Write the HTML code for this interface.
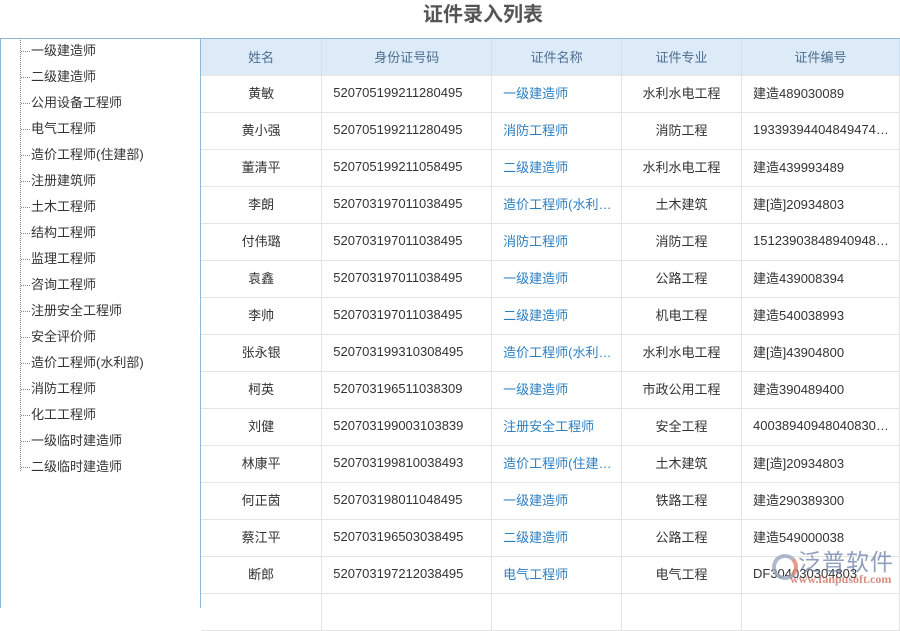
<!DOCTYPE html><html><head><meta charset="utf-8"><style>
body{margin:0;width:900px;height:597px;background:#fff;font-family:"Liberation Sans","Noto Sans CJK SC",sans-serif;overflow:hidden;position:relative}
.title{position:absolute;top:1px;left:0;width:966px;text-align:center;font-size:20px;font-weight:bold;color:#555;line-height:28px}
.panel{position:absolute;top:38px;left:0;width:900px;height:570px;border-top:1px solid #8fb8d6}
.left{position:absolute;top:38px;left:0;width:201px;height:570px;border-left:1px solid #8fb8d6;border-right:1px solid #8fb8d6;box-sizing:border-box}
.vline{position:absolute;left:19px;top:0;height:433px;border-left:1px dotted #888}
.item{position:absolute;left:30px;font-size:13px;color:#333;line-height:16px}
.item:before{content:"";position:absolute;left:-10px;top:8px;width:9px;border-top:1px dotted #888}
table{position:absolute;top:39px;left:201px;border-collapse:collapse;font-size:13px;color:#333}
td,th{height:36px;border-right:1px solid #e4e4e4;border-bottom:1px solid #e4e4e4;padding:0;white-space:nowrap;overflow:hidden}
th{background:#ddebf8;color:#4d6e8f;font-weight:normal;border-right:1px solid #cfe0f0;height:35px;padding-bottom:1px}
td{padding-bottom:3px;height:33px}
td.c{text-align:center}td.l{padding-left:11px}
.a{color:#2d7fc1}
</style></head><body>
<div class="title">证件录入列表</div>
<div class="panel"></div>
<div class="left"><div class="vline"></div>
<div class="item" style="top:5px">一级建造师</div><div class="item" style="top:31px">二级建造师</div><div class="item" style="top:57px">公用设备工程师</div><div class="item" style="top:83px">电气工程师</div><div class="item" style="top:109px">造价工程师(住建部)</div><div class="item" style="top:135px">注册建筑师</div><div class="item" style="top:161px">土木工程师</div><div class="item" style="top:187px">结构工程师</div><div class="item" style="top:213px">监理工程师</div><div class="item" style="top:239px">咨询工程师</div><div class="item" style="top:265px">注册安全工程师</div><div class="item" style="top:291px">安全评价师</div><div class="item" style="top:317px">造价工程师(水利部)</div><div class="item" style="top:343px">消防工程师</div><div class="item" style="top:369px">化工工程师</div><div class="item" style="top:395px">一级临时建造师</div><div class="item" style="top:421px">二级临时建造师</div>
</div>
<table>
<colgroup><col style="width:121px"><col style="width:170px"><col style="width:130px"><col style="width:120px"><col style="width:158px"></colgroup>
<tr><th>姓名</th><th>身份证号码</th><th>证件名称</th><th>证件专业</th><th>证件编号</th></tr>
<tr><td class="c">黄敏</td><td class="l">520705199211280495</td><td class="l a">一级建造师</td><td class="c">水利水电工程</td><td class="l">建造489030089</td></tr>
<tr><td class="c">黄小强</td><td class="l">520705199211280495</td><td class="l a">消防工程师</td><td class="c">消防工程</td><td class="l">19339394404849474…</td></tr>
<tr><td class="c">董清平</td><td class="l">520705199211058495</td><td class="l a">二级建造师</td><td class="c">水利水电工程</td><td class="l">建造439993489</td></tr>
<tr><td class="c">李朗</td><td class="l">520703197011038495</td><td class="l a">造价工程师(水利…</td><td class="c">土木建筑</td><td class="l">建[造]20934803</td></tr>
<tr><td class="c">付伟璐</td><td class="l">520703197011038495</td><td class="l a">消防工程师</td><td class="c">消防工程</td><td class="l">15123903848940948…</td></tr>
<tr><td class="c">袁鑫</td><td class="l">520703197011038495</td><td class="l a">一级建造师</td><td class="c">公路工程</td><td class="l">建造439008394</td></tr>
<tr><td class="c">李帅</td><td class="l">520703197011038495</td><td class="l a">二级建造师</td><td class="c">机电工程</td><td class="l">建造540038993</td></tr>
<tr><td class="c">张永银</td><td class="l">520703199310308495</td><td class="l a">造价工程师(水利…</td><td class="c">水利水电工程</td><td class="l">建[造]43904800</td></tr>
<tr><td class="c">柯英</td><td class="l">520703196511038309</td><td class="l a">一级建造师</td><td class="c">市政公用工程</td><td class="l">建造390489400</td></tr>
<tr><td class="c">刘健</td><td class="l">520703199003103839</td><td class="l a">注册安全工程师</td><td class="c">安全工程</td><td class="l">40038940948040830…</td></tr>
<tr><td class="c">林康平</td><td class="l">520703199810038493</td><td class="l a">造价工程师(住建…</td><td class="c">土木建筑</td><td class="l">建[造]20934803</td></tr>
<tr><td class="c">何正茵</td><td class="l">520703198011048495</td><td class="l a">一级建造师</td><td class="c">铁路工程</td><td class="l">建造290389300</td></tr>
<tr><td class="c">蔡江平</td><td class="l">520703196503038495</td><td class="l a">二级建造师</td><td class="c">公路工程</td><td class="l">建造549000038</td></tr>
<tr><td class="c">断郎</td><td class="l">520703197212038495</td><td class="l a">电气工程师</td><td class="c">电气工程</td><td class="l">DF304030304803</td></tr>
<tr><td class="c"></td><td></td><td></td><td></td><td></td></tr>
</table>
<div style="position:absolute;left:772px;top:554px;width:18px;height:18px;border-radius:50%;border:4px solid #9aa8c0;border-right-color:#e0826a;opacity:.8"></div>
<div style="position:absolute;left:798px;top:548px;font-size:23px;color:#6a7fa8;opacity:.75;letter-spacing:1px;line-height:28px;white-space:nowrap">泛普软件</div>
<div style="position:absolute;left:790px;top:572px;font-size:12px;color:#d07060;opacity:.8;font-family:'Liberation Serif',serif;font-weight:bold;white-space:nowrap">www.fanpusoft.com</div>
</body></html>
